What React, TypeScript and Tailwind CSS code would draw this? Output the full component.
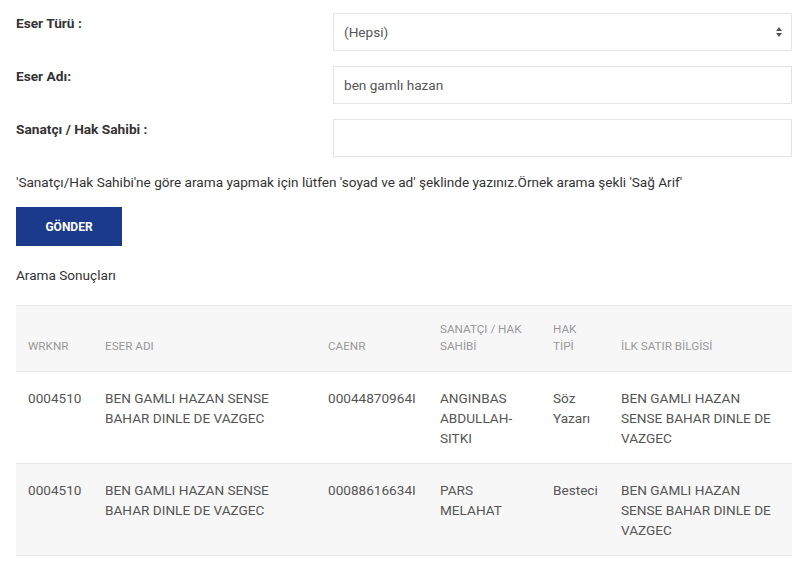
import React from "react";

const rows = [
  {
    wrknr: "0004510",
    eser: "BEN GAMLI HAZAN SENSE BAHAR DINLE DE VAZGEC",
    caenr: "00044870964I",
    sanatci: "ANGINBAS ABDULLAH-SITKI",
    hak: "Söz Yazarı",
    ilk: "BEN GAMLI HAZAN SENSE BAHAR DINLE DE VAZGEC",
  },
  {
    wrknr: "0004510",
    eser: "BEN GAMLI HAZAN SENSE BAHAR DINLE DE VAZGEC",
    caenr: "00088616634I",
    sanatci: "PARS MELAHAT",
    hak: "Besteci",
    ilk: "BEN GAMLI HAZAN SENSE BAHAR DINLE DE VAZGEC",
  },
];

const font = { fontFamily: "Roboto, 'Liberation Sans', sans-serif" };

function Label({ children }: { children: React.ReactNode }) {
  return (
    <label className="pt-[2px] text-[13.7px] leading-4 font-bold text-[#333]">
      {children}
    </label>
  );
}

export default function App() {
  return (
    <div className="min-h-[567px] bg-white pl-4 pr-2 pt-[13px]" style={font}>
      {/* arama formu */}
      <div className="grid grid-cols-[317px_1fr] gap-y-[15px]">
        <Label>Eser Türü :</Label>
        <div className="relative">
          <select
            defaultValue="(Hepsi)"
            className="h-[38px] w-full appearance-none border border-[#e6e6e6] bg-white pl-[10px] text-[13.6px] text-[#555] outline-none"
          >
            <option>(Hepsi)</option>
          </select>
          <svg
            className="pointer-events-none absolute right-[10px] top-[14px]"
            width="6"
            height="10"
            viewBox="0 0 6 10"
          >
            <path d="M3 0L6 4H0z M3 10L0 6H6z" fill="#555" />
          </svg>
        </div>

        <Label>Eser Adı:</Label>
        <input
          defaultValue="ben gamlı hazan"
          className="h-[38px] w-full border border-[#e3e3e3] pl-[10px] text-[13.6px] text-[#555] outline-none"
        />

        <Label>Sanatçı / Hak Sahibi :</Label>
        <input className="h-[38px] w-full border border-[#e3e3e3] pl-[10px] text-[13.6px] text-[#555] outline-none" />
      </div>

      <p className="mt-[16px] text-[13.6px] leading-[18px] text-[#333]">
        'Sanatçı/Hak Sahibi'ne göre arama yapmak için lütfen 'soyad ve ad' şeklinde yazınız.Örnek arama şekli 'Sağ Arif'
      </p>

      <button className="mt-[16px] h-[39px] w-[106px] bg-[#1c3a8c] text-[12px] font-bold text-white">
        GÖNDER
      </button>

      <p className="mt-[20px] text-[13.6px] leading-[18px] text-[#333]">Arama Sonuçları</p>

      {/* sonuç tablosu */}
      <table className="mt-[21px] w-full table-fixed border-collapse text-[13.6px]">
        <colgroup>
          <col className="w-[77px]" />
          <col className="w-[223px]" />
          <col className="w-[112px]" />
          <col className="w-[113px]" />
          <col className="w-[68px]" />
          <col />
        </colgroup>
        <thead>
          <tr className="h-[66px] border-t border-[#ebebeb] bg-[#f7f7f7] text-left align-bottom text-[11.7px] leading-[17px] font-normal text-[#999]">
            <th className="px-3 pb-4 font-normal">WRKNR</th>
            <th className="px-3 pb-4 font-normal">ESER ADI</th>
            <th className="px-3 pb-4 font-normal">CAENR</th>
            <th className="px-3 pb-4 font-normal">SANATÇI / HAK SAHİBİ</th>
            <th className="px-3 pb-4 font-normal">HAK TİPİ</th>
            <th className="px-3 pb-4 font-normal">İLK SATIR BİLGİSİ</th>
          </tr>
        </thead>
        <tbody>
          {rows.map((r, i) => (
            <tr
              key={i}
              className={`h-[92px] border-t border-b border-[#e6e6e6] align-top leading-5 text-[#555] ${
                i % 2 === 1 ? "bg-[#f7f7f7]" : "bg-white"
              }`}
            >
              <td className="px-3 pt-4">{r.wrknr}</td>
              <td className="px-3 pt-4">{r.eser}</td>
              <td className="px-3 pt-4">{r.caenr}</td>
              <td className="px-3 pt-4">{r.sanatci}</td>
              <td className="px-3 pt-4">{r.hak}</td>
              <td className="px-3 pt-4">{r.ilk}</td>
            </tr>
          ))}
        </tbody>
      </table>
    </div>
  );
}
